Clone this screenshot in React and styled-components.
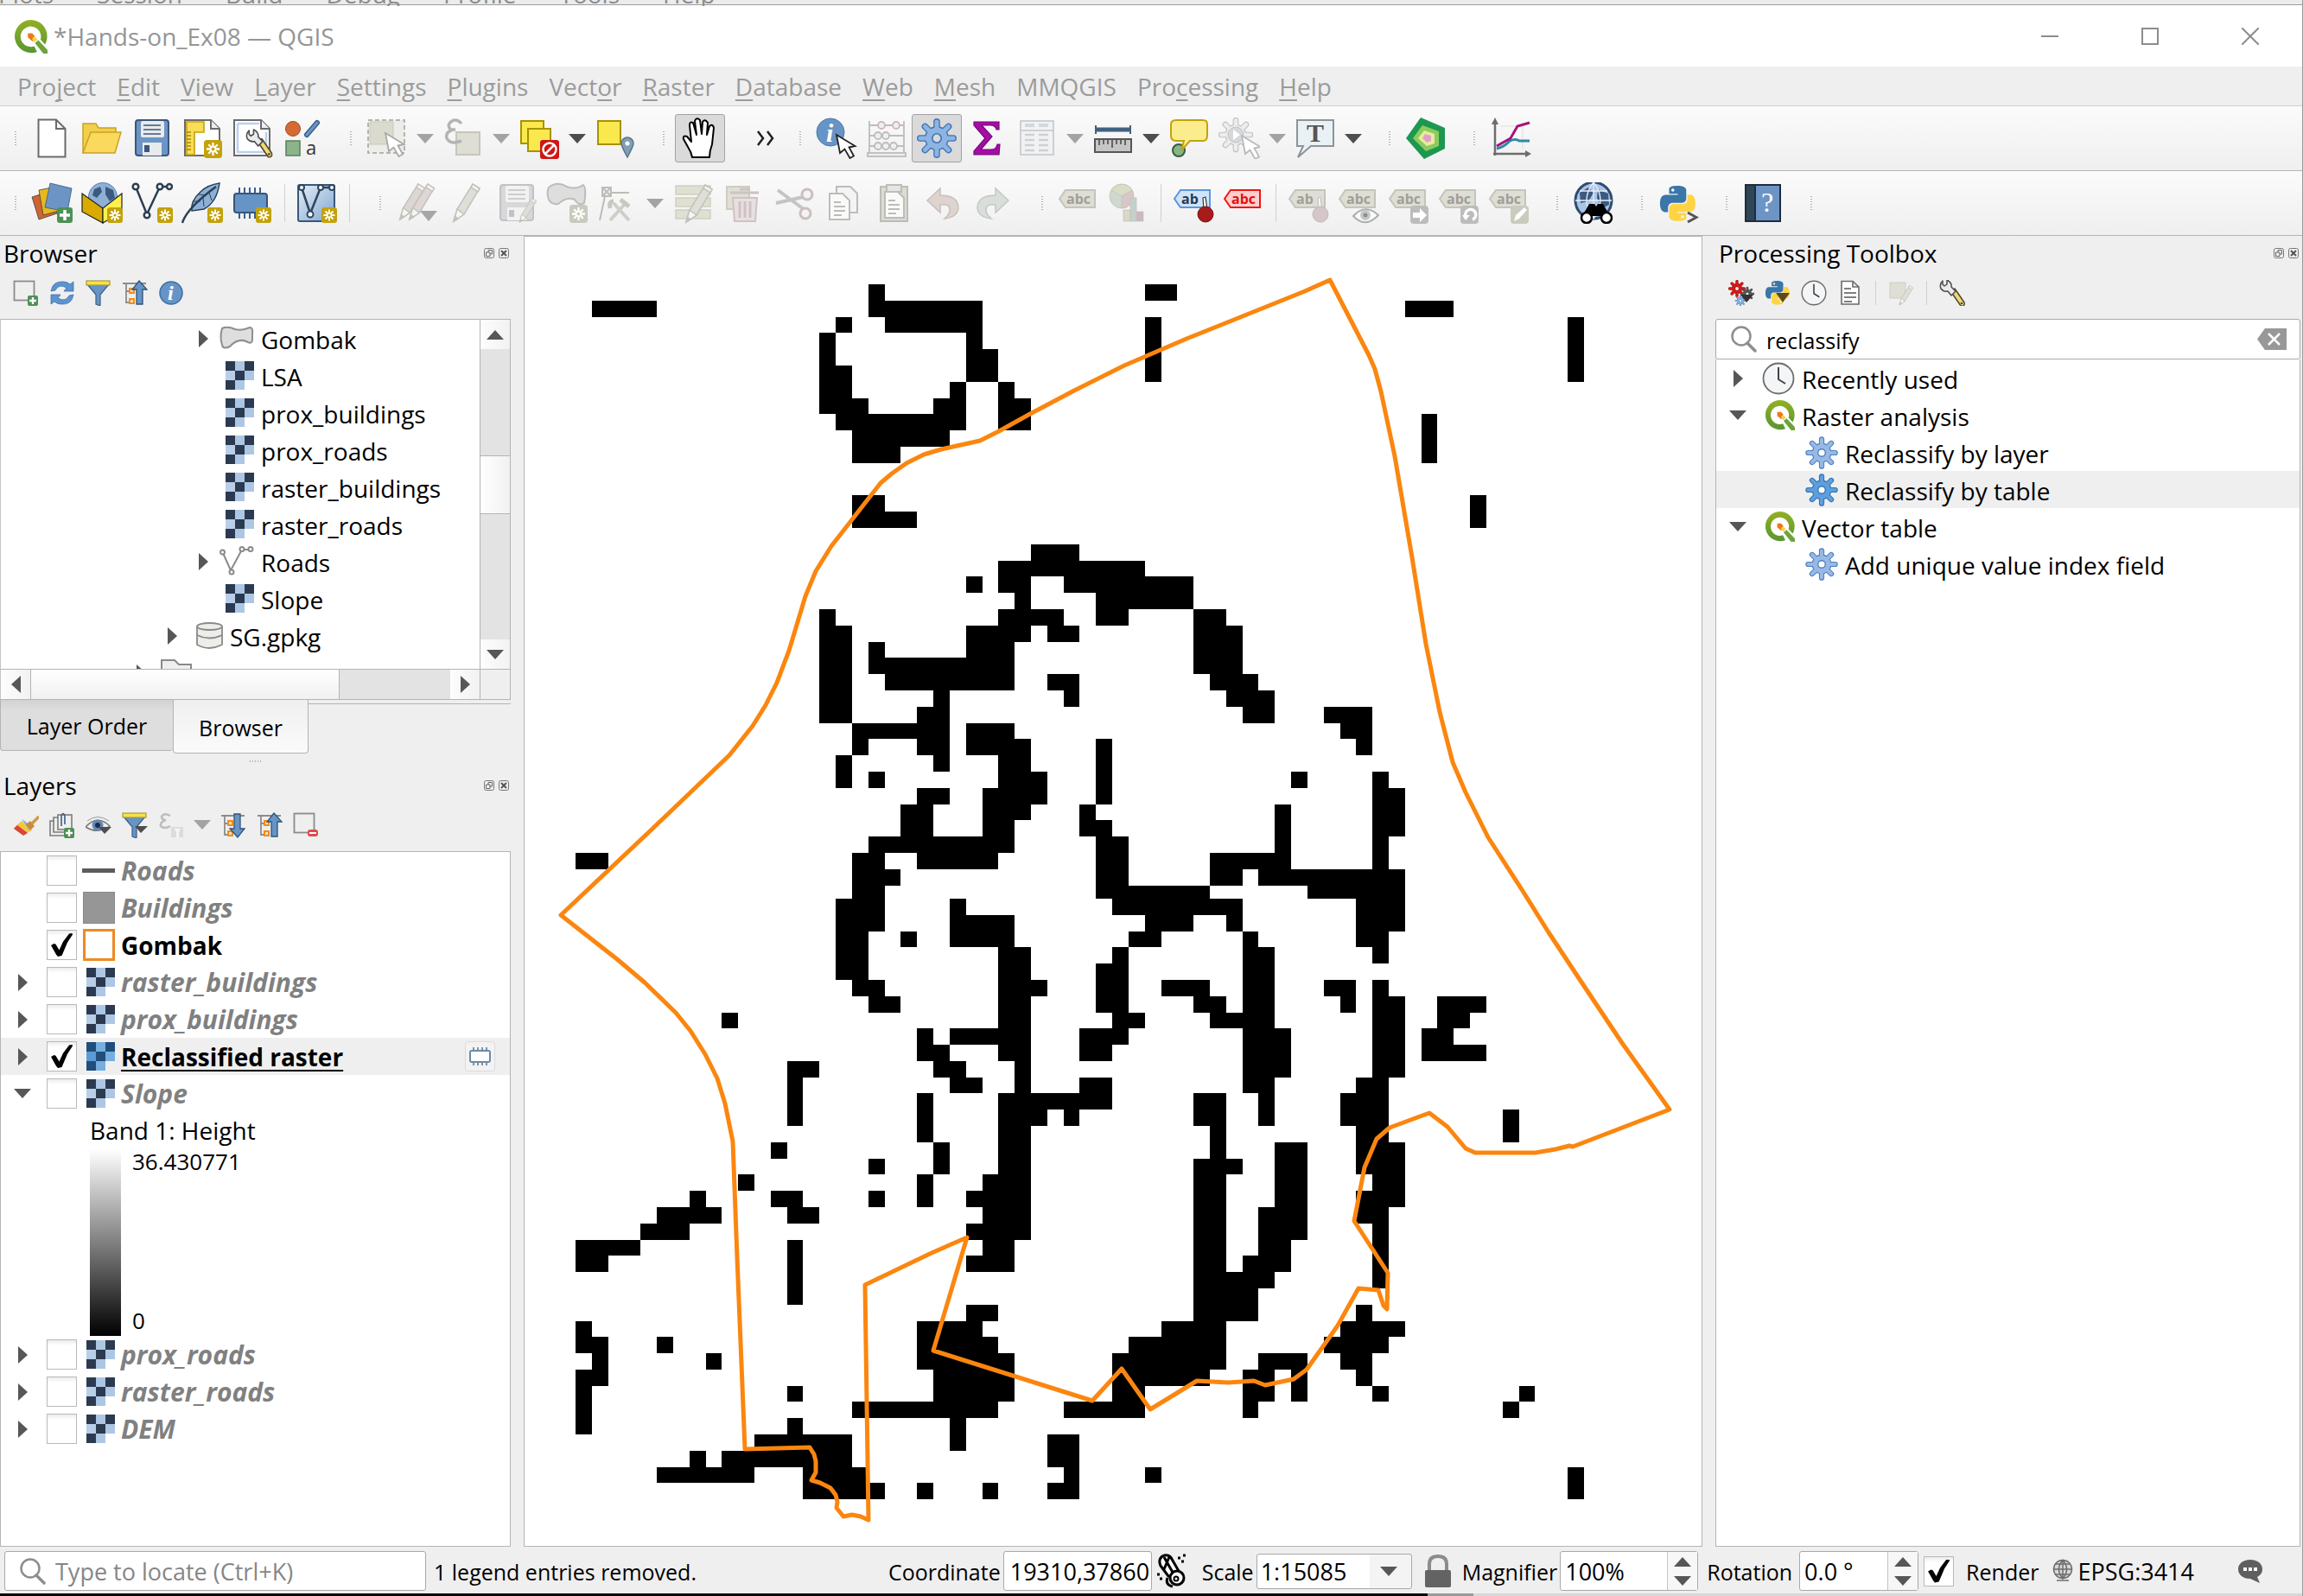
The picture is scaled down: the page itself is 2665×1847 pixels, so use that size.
import React from "react";
import styled, { createGlobalStyle, css } from "styled-components";

const GlobalStyle = createGlobalStyle`
  *, *::before, *::after { box-sizing: border-box; }
  html, body { margin: 0; padding: 0; }
  body { background: #efefef; }
  body, button, input, select { font-family: "Open Sans", "Noto Sans", sans-serif; }
  button { border: 0; padding: 0; margin: 0; background: none; color: inherit; }
  ul { list-style: none; margin: 0; padding: 0; }
`;

const LINE = "#b4b4b4";
const ORANGE = "#fb860f";

/* ---------- window frame ---------- */

const Window = styled.div`
  height: 100vh;
  display: flex;
  flex-direction: column;
  background: #efefef;
  border-right: 1px solid #9c9c9c;
  font-size: 28px;
  line-height: 36px;
  color: #000;
  overflow: hidden;
`;

const BehindMenu = styled.div`
  height: 7px;
  flex: none;
  overflow: hidden;
  display: flex;
  align-items: flex-end;
  gap: 52px;
  line-height: 28px;
  color: #8d8d8d;
  background: linear-gradient(#ececec 0 5px, #9c9c9c 5px 6px, #fff 6px);
  span { margin-left: -2px; }
`;

const TitleBar = styled.header`
  height: 70px;
  flex: none;
  display: flex;
  align-items: center;
  background: #fff;
  color: #959595;
  padding: 0 2px 0 16px;
`;

const TitleText = styled.h1`
  flex: 1;
  margin: 0 0 0 7px;
  font-size: 28px;
  font-weight: 400;
`;

const WindowButton = styled.button`
  width: 116px;
  height: 70px;
  display: grid;
  place-items: center;
`;

const MenuBar = styled.nav`
  height: 46px;
  flex: none;
  display: flex;
  align-items: center;
  padding-left: 8px;
  border-bottom: 1px solid #cfcfcf;
  color: #9b9b9b;
`;

const MenuItem = styled.button`
  font-size: 28px;
  line-height: 44px;
  padding: 0 12px;
  u { text-underline-offset: 4px; text-decoration-thickness: 2px; text-decoration-skip-ink: none; }
`;

const ToolRow = styled.div`
  height: 75px;
  flex: none;
  display: flex;
  align-items: center;
  background: linear-gradient(#fbfbfb, #efefef);
  border-bottom: 1px solid ${LINE};
`;

const Grip = styled.span`
  width: ${(p) => (p.$first ? 31 : 40)}px;
  height: 18px;
  flex: none;
  display: flex;
  justify-content: flex-end;
  padding-right: 11px;
  &::after {
    content: "";
    width: 4px;
    height: 18px;
    background: radial-gradient(circle, #b0b0b0 1px, transparent 1px) 0 0 / 4px 3px;
  }
`;

const Divider = styled.span`
  width: 17px;
  flex: none;
  height: ${(p) => (p.$small ? 28 : 44)}px;
  background: linear-gradient(#d0d0d0, #d0d0d0) center / 1px 100% no-repeat;
`;

const Tool = styled.button`
  width: 58px;
  height: 56px;
  flex: none;
  display: grid;
  place-items: center;
  ${(p) => p.$active && css`
    background: #dadada;
    border: 1px solid #a3a3a3;
    border-radius: 3px;
  `}
`;

const DropArrow = styled.button`
  width: 30px;
  height: 56px;
  flex: none;
  display: grid;
  place-items: center;
  color: ${(p) => (p.$off ? "#a3a3a3" : "#4d4d4d")};
  &::after {
    content: "";
    border: 10px solid transparent;
    border-top: 11px solid currentColor;
    border-bottom: 0;
  }
`;

const Overflow = styled.button`
  width: 60px;
  padding-left: 34px;
  flex: none;
  display: grid;
  place-items: center;
`;

/* ---------- docks ---------- */

const Main = styled.main`
  flex: 1;
  min-height: 0;
  display: grid;
  grid-template-columns: 591px minmax(0, 1fr) 677px;
  column-gap: 15px;
  padding-right: 2px;
`;

const Column = styled.div`
  min-width: 0;
  min-height: 0;
  display: flex;
  flex-direction: column;
`;

const Dock = styled.section`
  display: flex;
  flex-direction: column;
  min-height: 0;
  flex: ${(p) => (p.$grow ? "1" : "none")};
`;

const DockTitle = styled.header`
  height: 40px;
  flex: none;
  display: flex;
  align-items: center;
  gap: 5px;
  padding: 0 2px 0 4px;
  h2 { flex: 1; margin: 0; font-size: 28px; font-weight: 400; line-height: 40px; }
`;

const DockButton = styled.button`
  width: 12px;
  height: 12px;
  display: grid;
  place-items: center;
`;

const DockTools = styled.div`
  height: 56px;
  flex: none;
  display: flex;
  align-items: center;
  padding: 0 9px 5px;
`;

const SmallTool = styled.button`
  width: 42px;
  height: 40px;
  flex: none;
  display: grid;
  place-items: center;
`;

const BrowserBox = styled.div`
  border: 1px solid ${LINE};
  border-left-color: #c4c4c4;
  display: grid;
  grid-template-columns: minmax(0, 1fr) 35px;
  grid-template-rows: 404px 35px;
  background: #fff;
`;

const TreeView = styled.ul`
  overflow: hidden;
  background: #fff;
`;

const BrowserRow = styled.li`
  height: 43px;
  display: flex;
  align-items: center;
  padding-left: ${(p) => p.$level * 36 + 112}px;
`;

const Expander = styled.button`
  width: ${(p) => p.$w || 30}px;
  height: 30px;
  flex: none;
  display: grid;
  place-items: center;
  color: #575757;
  &::after {
    content: "";
    display: ${(p) => (p.$state ? "block" : "none")};
    border: 10px solid transparent;
    ${(p) => p.$state === "open"
      ? css`border-top: 11px solid currentColor; border-bottom: 0;`
      : css`border-left: 11px solid currentColor; border-right: 0;`}
  }
`;

const ItemIcon = styled.span`
  width: ${(p) => p.$w}px;
  flex: none;
  display: grid;
  justify-items: end;
`;

const ItemName = styled.span`
  margin-left: 8px;
  padding-top: 2px;
`;

const ScrollV = styled.div`
  display: flex;
  flex-direction: column;
  background: #e3e3e3;
  border-left: 1px solid ${LINE};
`;

const ScrollH = styled.div`
  display: flex;
  background: #e3e3e3;
  border-top: 1px solid ${LINE};
`;

const arrowShape = {
  up: css`border-bottom: 11px solid #575757; border-top: 0;`,
  down: css`border-top: 11px solid #575757; border-bottom: 0;`,
  left: css`border-right: 11px solid #575757; border-left: 0;`,
  right: css`border-left: 11px solid #575757; border-right: 0;`,
};

const ScrollButton = styled.button`
  flex: none;
  width: 34px;
  height: 34px;
  display: grid;
  place-items: center;
  background: linear-gradient(90deg, #fdfdfd, #f2f2f2);
  &::after { content: ""; border: 10px solid transparent; ${(p) => arrowShape[p.$dir]} }
`;

const Thumb = styled.div`
  background: linear-gradient(${(p) => (p.$vertical ? "90deg" : "180deg")}, #fff, #f1f1f1);
  border: solid ${LINE};
  border-width: ${(p) => (p.$vertical ? "1px 0" : "0 1px")};
  flex: ${(p) => p.$share} 0 0;
`;

const Trough = styled.div`
  flex: ${(p) => p.$share} 0 0;
`;

const Corner = styled.div`
  background: #efefef;
  border: solid ${LINE};
  border-width: 1px 0 0 1px;
`;

const Tabs = styled.div`
  height: 63px;
  flex: none;
  display: flex;
  align-items: flex-start;
  font-size: 25px;
`;

const Tab = styled.button`
  font-size: 25px;
  width: ${(p) => p.$w}px;
  height: ${(p) => (p.$active ? 62 : 59)}px;
  padding-top: 2px;
  background: ${(p) => (p.$active ? "linear-gradient(#efefef, #fbfbfb)" : "linear-gradient(#d2d2d2, #dedede 12px)")};
  border: solid ${LINE};
  border-width: ${(p) => (p.$active ? "0 1px 1px 1px" : "0 0 1px 1px")};
  border-radius: 0 0 4px 4px;
`;

const TabRest = styled.span`
  flex: 1;
  margin-top: 4px;
  border-top: 1px solid ${LINE};
`;

const Splitter = styled.div`
  height: 16px;
  flex: none;
  background: radial-gradient(circle, #b0b0b0 1px, transparent 1px) center / 3px 4px;
  background-clip: content-box;
  padding: 7px 287px 5px;
`;

const LayerList = styled.ul`
  flex: 1;
  min-height: 0;
  background: #fff;
  border: 1px solid ${LINE};
  overflow: hidden;
`;

const LayerRow = styled.li`
  height: 43px;
  display: flex;
  align-items: center;
  padding: 0 17px 0 10px;
  background: ${(p) => (p.$selected ? "#efefef" : "transparent")};
`;

const LayerName = styled.label`
  flex: 1;
  margin-left: 7px;
  font-size: ${(p) => (p.$on ? 28 : 30)}px;
  font-weight: 700;
  color: ${(p) => (p.$on ? "#000" : "#808080")};
  font-style: ${(p) => (p.$on ? "normal" : "italic")};
  text-decoration: ${(p) => (p.$current ? "underline" : "none")};
  text-decoration-thickness: 2px;
  text-underline-offset: 4px;
  text-decoration-skip-ink: none;
`;

const Check = styled.input`
  appearance: none;
  width: 35px;
  height: 35px;
  flex: none;
  margin: 0 0 0 ${(p) => p.$indent || 0}px;
  border: 1px solid #b9b9b9;
  background: linear-gradient(#ececec, #fff 6px);
  display: grid;
  place-items: center;
  &:checked::after {
    content: "";
    width: 25px;
    height: 27px;
    background: #000;
    clip-path: polygon(0 52%, 14% 44%, 22% 47%, 38% 72%, 56% 36%, 84% 2%, 98% 0, 100% 6%, 76% 40%, 50% 96%, 32% 100%, 24% 92%);
  }
`;

const MemoryButton = styled.button`
  width: 35px;
  height: 35px;
  display: grid;
  place-items: center;
  background: #f3f3f3;
  border: 1px solid #dcdcdc;
  border-radius: 4px;
`;

const Swatch = styled.span`
  width: 37px;
  height: 37px;
  background: ${(p) => p.$fill};
  border: ${(p) => p.$border};
`;

const LineSwatch = styled.span`
  width: 38px;
  height: 5px;
  background: #5c5c5c;
`;

const BandLabel = styled.li`
  height: 43px;
  line-height: 43px;
  padding-left: 103px;
`;

const Legend = styled.li`
  height: 216px;
  display: flex;
  gap: 13px;
  padding-left: 103px;
`;

const Ramp = styled.span`
  width: 36px;
  background: linear-gradient(#fff, #000);
`;

const RampValues = styled.span`
  display: flex;
  flex-direction: column;
  justify-content: space-between;
  font-size: 26px;
  line-height: 28px;
  padding-bottom: 4px;
`;

/* ---------- map ---------- */

const MapPane = styled.section`
  min-width: 0;
  min-height: 0;
  background: #fff;
  border: 1px solid ${LINE};
  svg { display: block; width: 100%; height: 100%; }
`;

/* ---------- processing toolbox ---------- */

const SearchBox = styled.label`
  height: 47px;
  flex: none;
  display: flex;
  align-items: center;
  gap: 10px;
  padding: 0 15px 0 17px;
  background: #fff;
  border: 1px solid #a9a9a9;
  border-radius: 3px;
  svg { flex: none; }
  button { display: grid; }
`;

const PlainInput = styled.input`
  flex: 1;
  min-width: 0;
  border: 0;
  outline: 0;
  padding: 2px 0 0;
  background: none;
  color: #000;
  font-size: ${(p) => (p.$tight ? 25 : 27)}px;
  line-height: 34px;
  &::placeholder { color: #868686; opacity: 1; }
`;

const ToolboxTree = styled.ul`
  flex: 1;
  min-height: 0;
  background: #fff;
  border: 1px solid ${LINE};
  border-top: 0;
`;

const ToolboxRow = styled.li`
  height: 43px;
  display: flex;
  align-items: center;
  padding-left: ${(p) => (p.$child ? 103 : 10)}px;
  background: ${(p) => (p.$selected ? "#efefef" : "transparent")};
`;

/* ---------- status bar ---------- */

const StatusBar = styled.footer`
  height: 54px;
  flex: none;
  display: flex;
  align-items: center;
  padding: 2px 45px 0 5px;
  font-size: 25px;
  line-height: 34px;
`;

const BottomEdge = styled.div`
  height: 3px;
  flex: none;
  background: linear-gradient(90deg, #0a0a0a 62%, #9a9a9a 62% 64%, #d8d8d8 64%);
`;

const Locate = styled.label`
  width: 488px;
  height: 46px;
  display: flex;
  align-items: center;
  gap: 10px;
  padding-left: 17px;
  background: #fff;
  border: 1px solid #a9a9a9;
  border-radius: 3px;
`;

const Message = styled.output`
  flex: 1;
  padding: 2px 0 0 9px;
`;

const StatusLabel = styled.label`
  padding-top: 2px;
  margin-right: ${(p) => p.$gap || 3}px;
  margin-left: ${(p) => p.$lead || 0}px;
`;

const Field = styled.span`
  width: ${(p) => p.$w}px;
  height: 46px;
  flex: none;
  display: flex;
  background: #fff;
  border: 1px solid #a9a9a9;
  border-radius: 3px;
  padding-left: ${(p) => p.$pad || 5}px;
  margin-right: ${(p) => p.$gap}px;
`;

const Steps = styled.span`
  width: 35px;
  display: grid;
  border-left: 1px solid #c4c4c4;
  background: #f7f7f7;
`;

const Step = styled.button`
  display: grid;
  place-items: center;
  &::after { content: ""; border: 10px solid transparent; ${(p) => arrowShape[p.$dir]} }
`;

const ScaleBox = styled.span`
  width: 180px;
  height: 41px;
  flex: none;
  display: grid;
  align-items: center;
  background: linear-gradient(90deg, #fff 130px, #f4f4f4 130px);
  border: 1px solid #a9a9a9;
  border-radius: 3px;
  margin-right: 15px;
  &::after {
    content: "";
    grid-area: 1 / 1;
    justify-self: end;
    margin-right: 16px;
    border: 10px solid transparent;
    border-top: 11px solid #575757;
    border-bottom: 0;
    pointer-events: none;
  }
  select {
    grid-area: 1 / 1;
    appearance: none;
    border: 0;
    background: none;
    font-size: 27px;
    line-height: 34px;
    padding: 2px 0 0 4px;
    color: #000;
  }
`;

const StatusButton = styled.button`
  display: flex;
  align-items: center;
  gap: 3px;
  font-size: 27px;
  margin-right: ${(p) => p.$gap || 0}px;
`;

/* ---------- icon drawings ---------- */

const Svg = ({ size = 48, box = 48, children }) => (
  <svg width={size} height={size} viewBox={`0 0 ${box} ${box}`} fill="none" aria-hidden="true">{children}</svg>
);

const Gear = ({ cx = 24, cy = 24, s = 1, fill = "#8db4e2", stroke = "#3f74b5", hole = "#fff" }) => {
  const spokes = (w, len, color) =>
    [0, 45, 90, 135].map((a) => (
      <rect key={a} x={-w / 2} y={-len} width={w} height={len * 2} rx={w / 2} fill={color} transform={`rotate(${a})`} />
    ));
  return (
    <g transform={`translate(${cx} ${cy}) scale(${s})`}>
      {spokes(7.6, 23, stroke)}
      <circle r="14" fill={stroke} />
      {spokes(5, 21.6, fill)}
      <circle r="12.6" fill={fill} />
      <circle r="6" fill={stroke} />
      <circle r="4.4" fill={hole} />
    </g>
  );
};

const Star = ({ x = 29, y = 29, s = 18, fill = "#c3a20b" }) => (
  <g transform={`translate(${x} ${y}) scale(${s / 18})`}>
    <rect width="18" height="18" rx="3" fill={fill} />
    <path d="M9 2.500v13M2.500 9h13M4.500 4.500l9 9M13.500 4.500l-9 9" stroke="#fff" strokeWidth="2" />
    <circle cx="9" cy="9" r="1.600" fill={fill} />
  </g>
);

const Cursor = ({ x = 0, y = 0, stroke = "#222" }) => (
  <path transform={`translate(${x} ${y})`} d="M0 0 L4 21 L9.500 16.500 L15.500 27 L20 24.500 L14.500 14.500 L21.500 13 Z" fill="#fff" stroke={stroke} strokeWidth="1.800" />
);

const Pencil = ({ x = 0, y = 0, s = 1, fill = "#dfdfd8", stroke = "#c2c2bc" }) => (
  <g transform={`translate(${x} ${y}) scale(${s})`} stroke={stroke} strokeWidth="1.500">
    <path d="M2 44 L6 30 L24 1 L32 6 L14 36 Z" fill={fill} />
    <path d="M22 5 L24 1 L32 6 L30 10 Z" fill="#f4f2f0" />
    <path d="M2 44 L6 30 L14 36 Z" fill="#f6f6f4" />
    <path d="M2 44 L3.500 38.500 L7 41 Z" fill={stroke} />
  </g>
);

const Tag = ({ text = "abc", fill = "#deded4", stroke = "#c4c4ba", color = "#9f9f98" }) => (
  <g>
    <path d="M2 19 L9 9 H43 V29 H9 Z" fill={fill} stroke={stroke} strokeWidth="2" />
    <text x="10" y="25" fontFamily="Open Sans, sans-serif" fontWeight="700" fontSize="16" fill={color}>{text}</text>
  </g>
);

const PY = "M14.25.18l.9.2.73.26.59.3.45.32.34.34.25.34.16.33.1.3.04.26.02.2-.01.13V8.5l-.05.63-.13.55-.21.46-.26.38-.3.31-.33.25-.35.19-.35.14-.33.1-.3.07-.26.04-.21.02H8.77l-.69.05-.59.14-.5.22-.41.27-.33.32-.27.35-.2.36-.15.37-.1.35-.07.32-.04.27-.02.21v3.06H3.17l-.21-.03-.28-.07-.32-.12-.35-.18-.36-.26-.36-.36-.35-.46-.32-.59-.28-.73-.21-.88-.14-1.05-.05-1.23.06-1.22.16-1.04.24-.87.32-.71.36-.57.4-.44.42-.33.42-.24.4-.16.36-.1.32-.05.24-.01h.16l.06.01h8.16v-.83H6.18l-.01-2.75-.02-.37.05-.34.11-.31.17-.28.25-.26.31-.23.38-.2.44-.18.51-.15.58-.12.64-.1.71-.06.77-.04.84-.02 1.27.05zm-6.3 1.98l-.23.33-.08.41.08.41.23.34.33.22.41.09.41-.09.33-.22.23-.34.08-.41-.08-.41-.23-.33-.33-.22-.41-.09-.41.09z";

const Python = ({ x = 0, y = 0, s = 1 }) => (
  <g transform={`translate(${x} ${y}) scale(${s})`}>
    <path d={PY} fill="#3a76a8" />
    <path d={PY} fill="#ffd444" transform="rotate(180 12 12)" />
  </g>
);

const Wrench = ({ x = 0, y = 0, s = 1 }) => (
  <g transform={`translate(${x} ${y}) scale(${s})`} strokeLinejoin="round">
    <path d="M14 14 L18 10 L29 26 Q30 31 25 30 Z" fill="#f0d774" stroke="#4c4833" strokeWidth="1.500" />
    <path d="M4 1 Q0 5 2 10 Q5 14 10 13 L14 18 L19 13 L14 8 Q15 3 9 0 L9 5 L6 7 L4 5 Z" fill="#e9ebec" stroke="#4d4d4d" strokeWidth="1.500" />
    <circle cx="26" cy="27" r="1.300" fill="#4c4833" />
  </g>
);

const Qgis = ({ size = 38 }) => (
  <Svg size={size}>
    <defs>
      <linearGradient id="qg" x1="0" y1="0" x2="0" y2="1"><stop offset="0" stopColor="#93b023" /><stop offset="1" stopColor="#589632" /></linearGradient>
    </defs>
    <path fill="url(#qg)" d="M24 0 A23.500 23.500 0 1 0 33 45.500 L29 37.500 A14.500 14.500 0 1 1 38 28 L44.500 35 A23.500 23.500 0 0 0 24 0 Z" />
    <path d="M20 19 h6 l4 4 l-3 3 v5 l-7 -6 z" fill="#ee7913" />
    <path d="M26 27 l4 -3 l4 4 l-5 4 z" fill="#f6d24a" />
    <path d="M30 33 l5 -4 L48 43 v5 h-6 Z" fill="#6fa33a" />
  </Svg>
);

const RasterIcon = ({ current }) => {
  const dark = current ? "#1f4e7c" : "#2b3a50";
  const light = current ? "#76aee0" : "#adc6e3";
  const mid = current ? "#5b9bd5" : "#b9cfe8";
  return (
    <Svg size={33} box={33}>
      <path d="M0 0h11v11H0zM22 0h11v11H22zM11 11h11v11H11zM0 22h11v11H0z" fill={dark} />
      <path d="M11 0h11v11H11zM22 11h11v11H22zM11 22h11v11H11z" fill={light} />
      <path d="M0 11h11v11H0z" fill={mid} />
    </Svg>
  );
};

const Magnifier = ({ size = 31 }) => (
  <Svg size={size} box={31}>
    <circle cx="12" cy="12" r="10.500" stroke="#8e8e8e" strokeWidth="2.500" />
    <path d="M19 20 L28 29" stroke="#8e8e8e" strokeWidth="3.500" strokeLinecap="round" />
  </Svg>
);

const Clock = ({ size }) => (
  <Svg size={size} box={38}>
    <circle cx="19" cy="19" r="17.500" fill="#f3f5f6" stroke="#6d6d6d" strokeWidth="1.800" />
    <path d="M19 6 V20 L27 25" stroke="#444" strokeWidth="2" />
  </Svg>
);

const Plus = ({ x, y, s = 18 }) => (
  <g transform={`translate(${x} ${y}) scale(${s / 18})`}>
    <rect width="18" height="18" rx="3" fill="#4d9058" />
    <path d="M9 3v12M3 9h12" stroke="#fff" strokeWidth="3.500" />
  </g>
);

const Funnel = () => (
  <g stroke="#3a5f86" strokeWidth="1.200">
    <path d="M2 5 L12 17 V28 L17 30 V17 L27 5 Z" fill="#6794c6" />
    <rect x="1" y="1" width="27" height="5" fill="#f6e24a" stroke="#a89a3a" />
  </g>
);

const TreeArrow = ({ down }) => (
  <g>
    <path d="M1 4 H28 M5 4 V26 H9 M5 13 H9" stroke="#8c8c8c" strokeWidth="1.800" />
    <path d="M9 10h5v5H9zM9 22h5v5H9z" fill="#fbdcae" stroke="#f08c1e" strokeWidth="2" />
    <path transform={down ? "rotate(180 20 15)" : undefined} d="M20 1 L29 11 H24 V28 H17 V11 H12 Z" fill="#6794c6" stroke="#2f5379" strokeWidth="1.300" />
  </g>
);

const VLine = ({ color = "#2d3e52", w = 2.5 }) => (
  <g stroke={color} strokeWidth={w}>
    <path d="M5 5 L18 37 L33 5 H43" />
    <circle cx="5" cy="5" r="3.300" fill="#fff" />
    <circle cx="18" cy="38" r="3.300" fill="#fff" />
    <circle cx="33" cy="5" r="3.300" fill="#fff" />
    <circle cx="44" cy="5" r="3" fill="#fff" />
  </g>
);

const Floppy = ({ body, edge, label = "#e9eaec" }) => (
  <g>
    <rect x="5" y="3" width="38" height="41" rx="3" fill={body} stroke={edge} strokeWidth="2" />
    <rect x="11" y="4" width="27" height="19" rx="2" fill={label} />
    <path d="M14 9h20M14 14h20M14 19h20" stroke={edge} strokeWidth="1.500" />
    <rect x="13" y="29" width="22" height="15" fill={label} />
    <rect x="15" y="32" width="6" height="8" fill={edge} />
  </g>
);

const GREY = "#bdbdb8";

const ICONS = {
  newDoc: <path d="M8.500 2.500 H29 L39.500 13 V45.500 H8.500 Z M29 3 V13 H39" fill="#fff" stroke="#6b6b6b" strokeWidth="2" />,
  open: (
    <g stroke="#c9a227" strokeWidth="1.500">
      <path d="M2 41 V7 H17 L20 12 H40 V20 H12 Z" fill="#f1cf4a" />
      <path d="M2 41 L11 17 H46 L39 41 Z" fill="#fbd95c" />
    </g>
  ),
  save: <Floppy body="#6c95c6" edge="#3a5778" />,
  layout: (
    <g>
      <path d="M4 3 H34 L44 13 V44 H4 Z" fill="#fff" stroke="#6b6b6b" strokeWidth="2" />
      <path d="M34 3 V13 H44" fill="#eee" stroke="#6b6b6b" strokeWidth="2" />
      <path d="M6 5 H26 V17 H15 V43 H6 Z" fill="#f8dd55" stroke="#c3a20b" strokeWidth="1.600" />
      <path d="M6 21h5M6 25h5M6 29h5M6 33h5M6 37h5M6 17h5" stroke="#a28608" strokeWidth="1.400" />
      <Star x={26} y={26} s={21} />
    </g>
  ),
  layoutManager: (
    <g>
      <path d="M3 3 H34 L44 13 V44 H3 Z" fill="#fff" stroke="#6b6b6b" strokeWidth="2" />
      <path d="M34 3 V13 H44" fill="#eee" stroke="#6b6b6b" strokeWidth="2" />
      <path d="M7 7 H32 M7 7 V40 H40 V17" stroke="#bcd0ee" strokeWidth="2.500" />
      <Wrench x={16} y={14} s={1.05} />
    </g>
  ),
  style: (
    <g>
      <circle cx="13" cy="13" r="8.500" fill="#d46a34" stroke="#a74a1b" />
      <path d="M29 20 L41 6" stroke="#3a5f8c" strokeWidth="6" strokeLinecap="round" />
      <path d="M29 20 L41 6" stroke="#6c95c6" strokeWidth="3" strokeLinecap="round" />
      <rect x="5" y="27" width="16" height="17" fill="#8cb38a" stroke="#55805a" strokeWidth="1.500" />
      <text x="28" y="43" fontSize="22" fontFamily="Open Sans, sans-serif" fill="#333">a</text>
    </g>
  ),
  select: (
    <g>
      <rect x="2" y="3" width="42" height="38" stroke="#b4b4ae" strokeWidth="2" strokeDasharray="5 3" fill="#ecece8" />
      <rect x="4" y="5" width="27" height="26" fill="#dadace" stroke="#c9c9be" />
      <Cursor x={22} y={18} stroke="#a9a9a9" />
    </g>
  ),
  selectExpr: (
    <g>
      <rect x="16" y="17" width="27" height="26" fill="#deded4" stroke="#c6c6bb" strokeWidth="2" />
      <path d="M22 7 Q17 1 11 4 Q4 9 10 14 H15 M12 14 Q3 17 5 24 Q9 32 22 27" stroke="#b4b4b4" strokeWidth="3.500" />
    </g>
  ),
  deselect: (
    <g>
      <rect x="3" y="4" width="26" height="26" fill="#fae84f" stroke="#a89200" strokeWidth="2" />
      <rect x="11" y="13" width="26" height="26" fill="#fae84f" stroke="#a89200" strokeWidth="2" />
      <rect x="25" y="26" width="22" height="22" rx="3" fill="#cf1515" />
      <circle cx="36" cy="37" r="7.500" stroke="#fff" strokeWidth="2.500" />
      <path d="M31 42 L41 32" stroke="#fff" strokeWidth="2.500" />
    </g>
  ),
  selectPin: (
    <g>
      <rect x="4" y="4" width="26" height="27" fill="#fae84f" stroke="#a89200" strokeWidth="2" />
      <path d="M38 46 Q31 33 31 30 A7 7 0 0 1 45 30 Q45 33 38 46 Z" fill="#7f9fb8" stroke="#567489" strokeWidth="1.500" />
      <circle cx="38" cy="30" r="2.500" fill="#fff" />
    </g>
  ),
  hand: (
    <path d="M15 46 Q14 40 10 34 L5 25 Q4 20 9 22 L14 28 L12 9 Q12 4 16 6 L20 20 L18 4 Q20 -1 24 3 L26 19 L27 5 Q30 1 33 6 L32 20 L35 10 Q39 7 40 12 L38 31 Q35 39 35 46 Z" fill="#fff" stroke="#000" strokeWidth="2" strokeLinejoin="round" />
  ),
  identify: (
    <g>
      <circle cx="17" cy="17" r="16" fill="#6794c6" stroke="#4a78ab" />
      <text x="12" y="28" fontSize="30" fontWeight="700" fontStyle="italic" fontFamily="Liberation Serif, serif" fill="#fff">i</text>
      <Cursor x={24} y={20} />
    </g>
  ),
  abacus: (
    <g stroke="#bcbcbc" strokeWidth="1.800" fill="#efefef">
      <path d="M4 4 V41 M44 4 V41 M4 9 H44 M4 21 H44 M4 33 H44" />
      <rect x="2" y="41" width="44" height="4" />
      <circle cx="18" cy="9" r="4" stroke="#d0b7b7" /><circle cx="35" cy="9" r="4" stroke="#d0b7b7" />
      <circle cx="14" cy="21" r="4" /><circle cx="23" cy="21" r="4" />
      <circle cx="14" cy="33" r="4" /><circle cx="23" cy="33" r="4" /><circle cx="32" cy="33" r="4" />
    </g>
  ),
  gear: <Gear hole="#dadada" />,
  sigma: <path d="M9 5 H38 V14 H35 Q34 9 28 9 H18 L30 22 L17 37 H29 Q35 37 36 31 H39 L38 43 H9 V39 L22 24 L9 9 Z" fill="#a60ca6" stroke="#74087a" strokeWidth="1.200" />,
  table: (
    <g stroke="#c0c4c8" strokeWidth="1.500">
      <rect x="5" y="4" width="38" height="39" fill="#f1f2f3" />
      <path d="M5 15 H43" />
      <path d="M10 9h11M26 9h11" strokeWidth="4" stroke="#d3d8dd" />
      <path d="M10 20h11M26 20h11M10 26h11M26 26h11M10 32h11M26 32h11M10 38h11M26 38h11" strokeWidth="2.500" stroke="#cdd1d5" />
    </g>
  ),
  measure: (
    <g>
      <path d="M4 14 H44 M4 9 V19 M44 9 V19" stroke="#41617f" strokeWidth="2" />
      <path d="M5 14 H43" stroke="#41617f" strokeWidth="5" />
      <rect x="3" y="25" width="42" height="15" fill="#c6c6c6" stroke="#555" strokeWidth="2" />
      <path d="M8 26v6M13 26v5M18 26v5M23 26v9M28 26v5M33 26v5M38 26v6" stroke="#444" strokeWidth="1.500" />
    </g>
  ),
  mapTip: (
    <g>
      <circle cx="12" cy="38" r="7" fill="#86b58a" stroke="#3a5a3c" strokeWidth="2" />
      <path d="M9 3 H40 Q45 3 45 8 V21 Q45 27 40 27 H25 L15 38 L18 27 H9 Q3 27 3 21 V8 Q3 3 9 3 Z" fill="#fbed8d" stroke="#c3a20b" strokeWidth="2" />
    </g>
  ),
  actions: (
    <g>
      <Gear cx={20} cy={20} s={0.88} fill="#ededed" stroke="#c2c2c2" hole="#dcdcdc" />
      <circle cx="20" cy="20" r="9" fill="#d6d9dc" stroke="#bfc3c7" />
      <path d="M17 14 L25 20 L17 26 Z" fill="#fff" />
      <Cursor x={27} y={21} stroke="#b9b9b9" />
    </g>
  ),
  annotation: (
    <g>
      <path d="M3 3 H45 V33 H19 L4 46 L10 33 H3 Z" fill="#eaf1f5" stroke="#8d9499" strokeWidth="2" />
      <text x="14" y="28" fontSize="30" fontFamily="Liberation Serif, serif" fontWeight="700" fill="#555">T</text>
    </g>
  ),
  contour: (
    <g>
      <path d="M18 0 L46 12 V36 L22 48 L1 24 Z" fill="#1c9850" />
      <path d="M20 9 L39 16 V33 L24 39 L9 24 Z" fill="#8ccb5e" />
      <path d="M22 15 L34 19 V30 L25 33 L15 24 Z" fill="#e4ee9c" />
      <path d="M23 19 L30 21 V27 L25 29 L20 24 Z" fill="#e3a0c4" />
    </g>
  ),
  plot: (
    <g>
      <path d="M12 10 H38 V37" stroke="#ddd" />
      <path d="M8 36 Q17 34 23 27 Q30 24 34 27 H46" stroke="#2e8aa8" strokeWidth="3" />
      <path d="M8 33 L24 24 L32 10 L46 6" stroke="#a5127c" strokeWidth="3" />
      <path d="M6 44 V4 M4 42 H44" stroke="#6d6d6d" strokeWidth="2.500" />
      <path d="M2 8 L6 0 L10 8 Z M41 38 L48 42 L41 46 Z" fill="#6d6d6d" />
    </g>
  ),

  addLayers: (
    <g stroke="#3f3f3f" strokeWidth="0.800">
      <path d="M1 17 L20 11 L30 36 L9 43 Z" fill="#cf6433" />
      <path d="M9 9 L24 6 L32 33 L14 38 Z" fill="#e6b91c" />
      <path d="M22 1 L47 7 L42 34 L16 29 Z" fill="#6c95c6" stroke="#3a5778" />
      <g stroke="none"><Plus x={30} y={29} /></g>
    </g>
  ),
  geopackage: (
    <g>
      <circle cx="25" cy="17" r="16.500" fill="#8fb0d6" stroke="#5d81ac" />
      <path d="M15 8 L22 5 L24 11 L18 18 L13 15 Z M28 5 L37 9 L39 18 L33 22 L28 14 Z" fill="#3b5a80" />
      <path d="M1 13 L25 30 V47 L1 34 Z" fill="#d9ab00" stroke="#222" strokeWidth="1.200" />
      <path d="M47 13 L25 30 V47 L47 34 Z" fill="#fdf04e" stroke="#222" strokeWidth="1.200" />
      <Star x={30} />
    </g>
  ),
  newShape: <g><VLine /><Star x={30} /></g>,
  feather: (
    <g>
      <path d="M44 1 Q41 23 26 31 L12 33 Q10 22 22 11 Q30 3 44 1 Z" fill="#8db0d6" stroke="#2b3f58" strokeWidth="1.500" />
      <path d="M1 47 Q6 30 40 5" stroke="#2b3f58" strokeWidth="2.500" />
      <path d="M20 14 L29 15 M14 22 L22 22 M26 28 L25 18 M35 21 L32 12" stroke="#2b3f58" />
      <Star x={30} />
    </g>
  ),
  chip: (
    <g>
      <path d="M9 6v8M15 6v8M21 6v8M27 6v8M33 6v8M9 34v8M15 34v8M21 34v8M27 34v8" stroke="#3a5f8c" strokeWidth="2" />
      <rect x="3" y="13" width="38" height="22" rx="3" fill="#6794c6" stroke="#34557c" strokeWidth="2" />
      <Star x={28} />
    </g>
  ),
  virtualLayer: (
    <g>
      <defs><linearGradient id="vl" x1="0" y1="0" x2="1" y2="1"><stop offset="0" stopColor="#e7eef6" /><stop offset="1" stopColor="#7fa5d0" /></linearGradient></defs>
      <rect x="2" y="3" width="42" height="42" rx="2" fill="url(#vl)" stroke="#3a5778" strokeWidth="2" />
      <path d="M6 6 L16 36 L28 6 H42" stroke="#2d4560" strokeWidth="2.500" />
      <circle cx="6" cy="6" r="3" fill="#fff" stroke="#2d4560" strokeWidth="2" /><circle cx="16" cy="37" r="3.500" fill="#fff" stroke="#2d4560" strokeWidth="2" />
      <circle cx="28" cy="6" r="3" fill="#fff" stroke="#2d4560" strokeWidth="2" /><circle cx="41" cy="6" r="3" fill="#fff" stroke="#2d4560" strokeWidth="2" />
      <Star x={29} />
    </g>
  ),
  currentEdits: (
    <g>
      <Pencil x={3} y={1} s={0.95} fill="#ddd6d3" /><Pencil x={14} y={1} s={0.95} fill="#e0d6d4" />
      <path d="M28 33 H48 L38 45 Z" fill="#a6a6a6" />
    </g>
  ),
  pencil: <Pencil x={7} y={1} />,
  saveEdits: <g><Floppy body="#d8d8da" edge="#c2c2c5" label="#f2f2f2" /><Pencil x={26} y={18} s={0.64} fill="#e0dbd6" /></g>,
  addPolygon: (
    <g>
      <path d="M3 6 Q12 -2 24 5 Q34 9 43 3 Q47 8 44 24 Q38 28 33 20 Q24 16 14 25 Q6 26 3 20 Q0 12 3 6 Z" fill="#dedede" stroke={GREY} strokeWidth="2" />
      <Star x={27} y={26} s={21} fill="#c9c9bf" />
    </g>
  ),
  vertexTool: (
    <g stroke={GREY} strokeWidth="2">
      <path d="M17 12 H38 M10 16 L4 44" />
      <rect x="7" y="6" width="10" height="10" fill="#eee" /><path d="M7 6l10 10M17 6L7 16" />
      <path d="M16 44 L34 24 M38 44 L20 24" strokeWidth="4" stroke="#cfcfca" />
      <path d="M16 30 Q14 22 20 22 M28 20 L38 28" strokeWidth="5" stroke="#c8c8c2" />
    </g>
  ),
  editTable: (
    <g>
      <path d="M4 4h40v10H4zM4 18h40v10H4zM4 32h40v10H4z" fill="#dfdfd2" stroke="#cfcfc2" strokeWidth="1.500" />
      <Pencil x={14} y={2} />
    </g>
  ),
  trash: (
    <g stroke="#d0c2c2" strokeWidth="2">
      <rect x="5" y="5" width="26" height="26" fill="#dfdfd6" stroke="#cdcdc0" />
      <path d="M12 18 H40 L38 45 H14 Z" fill="#e8e0e0" />
      <path d="M9 12 H42 M20 8 H32 M20 22 V41 M26 22 V41 M32 22 V41" strokeWidth="3" />
    </g>
  ),
  cut: (
    <g stroke="#c4c4c4" strokeWidth="2">
      <path d="M6 9 L36 31 M4 24 L40 16" strokeWidth="4" />
      <circle cx="40" cy="14" r="6" fill="#f3f3f3" stroke="#cbbebe" strokeWidth="3" /><circle cx="38" cy="36" r="6" fill="#f3f3f3" stroke="#cbbebe" strokeWidth="3" />
    </g>
  ),
  copy: (
    <g stroke={GREY} strokeWidth="2" fill="#f4f4f4">
      <path d="M16 5 H32 L40 13 V35 H16 Z" /><path d="M8 13 H23 L31 21 V43 H8 Z" fill="#fafafa" />
      <path d="M13 23h8M13 28h13M13 33h13M13 38h9" />
    </g>
  ),
  paste: (
    <g stroke={GREY} strokeWidth="2">
      <rect x="9" y="5" width="31" height="40" fill="#dcdcd2" /><path d="M14 11 H29 L36 18 V41 H14 Z" fill="#fafafa" />
      <rect x="16" y="3" width="17" height="8" fill="#e5e5e5" />
      <path d="M18 21h8M18 26h13M18 31h13M18 36h9" />
    </g>
  ),
  undo: <path d="M5 21 L20 7 V15 Q41 15 41 30 Q40 40 25 42 Q34 34 30 28 Q28 25 20 26 V35 Z" fill="#ddd3cf" stroke="#c9bfba" strokeWidth="1.500" />,
  redo: <path transform="matrix(-1 0 0 1 46 0)" d="M5 21 L20 7 V15 Q41 15 41 30 Q40 40 25 42 Q34 34 30 28 Q28 25 20 26 V35 Z" fill="#dadedb" stroke="#c2c8c4" strokeWidth="1.500" />,
  label: <Tag />,
  diagram: (
    <g stroke="#c3c3bc" strokeWidth="0.800">
      <circle cx="16" cy="16" r="14" fill="#cfd8cf" />
      <path d="M16 16 L28 9 A14 14 0 0 1 16 30 Z" fill="#dac6c6" /><path d="M16 16 L4 9 A14 14 0 0 1 28 9 Z" fill="#dcdcc6" />
      <path d="M18 32h8v13h-8z" fill="#d8d8c6" /><path d="M26 18h7v27h-7z" fill="#c3d0cc" /><path d="M33 34h8v11h-8z" fill="#ccb8be" />
    </g>
  ),
  labelPin: (
    <g>
      <Tag text="ab" fill="#cfe4fb" stroke="#5a96dc" color="#2b3a4a" />
      <path d="M35 18 L38 17 L40 32 L36 32 Z" fill="#fff" stroke="#333" strokeWidth="1.200" />
      <circle cx="38" cy="37" r="9" fill="#a71b1b" stroke="#7b1010" />
    </g>
  ),
  labelRed: <Tag fill="#ffcfcf" stroke="#f01414" color="#e01010" />,
  labelPinOff: (
    <g>
      <Tag text="ab" />
      <path d="M35 18 L38 17 L40 32 L36 32 Z" fill="#f6f6f6" stroke={GREY} />
      <circle cx="38" cy="37" r="9" fill="#d5c7c9" stroke="#c5b6b8" />
    </g>
  ),
  labelEye: (
    <g>
      <Tag />
      <path d="M18 39 Q32 24 47 38 Q32 54 18 39 Z" fill="#fafafa" stroke="#adadad" strokeWidth="2" /><circle cx="32" cy="38" r="6" fill="#c4c8cb" /><circle cx="32" cy="38" r="2.500" fill="#8f8f8f" />
    </g>
  ),
  labelMove: (
    <g><Tag /><rect x="26" y="27" width="21" height="21" rx="4" fill="#bcbcbc" /><path d="M29 35h8v-5l8 8-8 8v-5h-8z" fill="#fff" /></g>
  ),
  labelRotate: (
    <g><Tag /><rect x="26" y="27" width="21" height="21" rx="4" fill="#bcbcbc" /><path d="M32 39 A6 6 0 1 1 40 43" stroke="#fff" strokeWidth="3.500" /><path d="M28 38h9l-5 6z" fill="#fff" /></g>
  ),
  labelEdit: (
    <g><Tag /><rect x="26" y="27" width="21" height="21" rx="4" fill="#cacabf" /><path d="M30 45l2-7L42 29l3 3-9 10z" fill="#fff" /></g>
  ),
  search: (
    <g>
      <circle cx="24" cy="21" r="21" fill="#a9c4e4" stroke="#2f4c70" strokeWidth="3" />
      <path d="M8 12 L18 6 L24 12 L18 22 L9 24 Z M29 8 L41 13 L42 26 L34 30 L28 18 Z" fill="#3b5a80" />
      <path d="M3 21H45M8 10H40M24 0V42M24 0Q8 20 24 42Q40 20 24 0" stroke="#e6eff9" strokeWidth="1.300" />
      <path d="M19 25h6l2 3 2-3h6l8 14H11z" fill="#000" />
      <circle cx="16" cy="41" r="6" fill="#fff" stroke="#000" strokeWidth="2.500" /><circle cx="39" cy="41" r="6" fill="#fff" stroke="#000" strokeWidth="2.500" />
    </g>
  ),
  python: <g><Python x={3} y={4} s={1.7} /><path d="M35 35 L45 40.500 L35 46" stroke="#555" strokeWidth="3" /></g>,
  help: (
    <g>
      <rect x="4" y="3" width="40" height="42" fill="#6c95c6" stroke="#1f2c3b" strokeWidth="2" />
      <rect x="4" y="3" width="11" height="42" fill="#2f4558" stroke="#1f2c3b" strokeWidth="2" />
      <text x="22" y="34" fontSize="32" fontFamily="Liberation Serif, serif" fill="#fff">?</text>
    </g>
  ),
};

const SMALL = {
  addItem: <g><rect x="1.500" y="1.500" width="23" height="22" stroke="#8c8c8c" strokeWidth="1.800" /><Plus x={17} y={18} s={12} /></g>,
  refresh: (
    <g fill="#5d93cf" stroke="#3c71ad" strokeWidth="0.800">
      <path d="M2 13 Q4 1 16 2 Q21 2 24 5 L28 2 V13 H17 L20 9 Q11 4 7 12 Z" /><path transform="rotate(180 15 15)" d="M2 13 Q4 1 16 2 Q21 2 24 5 L28 2 V13 H17 L20 9 Q11 4 7 12 Z" />
    </g>
  ),
  filter: <Funnel />,
  collapse: <TreeArrow />,
  expand: <TreeArrow down />,
  info: <g><circle cx="15" cy="15" r="13" fill="#6794c6" stroke="#3f6ea6" strokeWidth="1.500" /><text x="11" y="23" fontSize="24" fontWeight="700" fontStyle="italic" fontFamily="Liberation Serif, serif" fill="#fff">i</text></g>,
  styling: (
    <g>
      <path d="M1 18 L10 10 L22 21 L12 26 Z" fill="#f3c83d" /><path d="M1 19 L5 15 L17 24 L12 27 Z" fill="#d9433a" /><path d="M10 8 L15 11 L22 18 L18 20 Z" fill="#88b3e0" />
      <path d="M15 14 L20 10 L25 16 L20 21 Z" fill="#c98a3c" /><path d="M22 13 L30 5" stroke="#d19845" strokeWidth="3.500" />
    </g>
  ),
  addGroup: (
    <g stroke="#7c7c7c" strokeWidth="1.600"><path d="M6 10 H1 V27 H18 M10 6 H5 V23 H22" /><rect x="10" y="3" width="16" height="17" fill="#efefef" /><path d="M14 16 V4 Q16 -1 18 4 V14" stroke="#3a5f8c" /><g stroke="none"><Plus x={17} y={18} s={12} /></g></g>
  ),
  eye: <g><path d="M0 17 Q14 2 28 16 Q14 26 0 17 Z" fill="#e8eef5" stroke="#777" strokeWidth="1.500" /><path d="M2 10 Q14 1 27 10" stroke="#999" /><circle cx="14" cy="15" r="6.500" fill="#6288b4" /><circle cx="14" cy="15" r="3" fill="#1d2d40" /><path d="M15 17 H30 L22 25 Z" fill="#4d4d4d" /></g>,
  filterDrop: <g><Funnel /><path d="M15 16 H30 L22 24 Z" fill="#4d4d4d" /></g>,
  exprOff: <g><path d="M14 4 Q7 0 4 5 Q4 9 9 9 Q2 11 3 16 Q7 20 14 16" stroke="#bdbdbd" strokeWidth="2.500" /><rect x="15" y="17" width="14" height="12" fill="#dcdcdc" /><path d="M19 19 h7 l-2 4 v6 h-3 v-6z" fill="#f5f5f5" /></g>,
  removeItem: <g><rect x="1.500" y="1.500" width="23" height="22" stroke="#8c8c8c" strokeWidth="1.800" /><rect x="17" y="20" width="12" height="8" rx="3" fill="#e04a4a" /><path d="M19 24h8" stroke="#fff" strokeWidth="2" /></g>,
  models: (
    <g><Gear cx={10} cy={10} s={0.44} fill="#d11a1a" stroke="#b31313" hole="#efefef" /><Gear cx={22} cy={16} s={0.36} fill="#555" stroke="#444" hole="#efefef" /><Gear cx={14} cy={24} s={0.28} hole="#efefef" /><path d="M14 17 H29 L21 26 Z" fill="#333" /></g>
  ),
  pythonDrop: <g><Python x={1} y={1} s={1.15} /><path d="M13 15 H29 L21 26 Z" fill="#5d4a1c" /></g>,
  results: <g><path d="M5 1.500 H18 L25 8 V28 H5 Z M18 2 V8 H25" fill="#fff" stroke="#6b6b6b" strokeWidth="1.600" /><path d="M8 10h8M8 15h14M8 20h14M8 25h9" stroke="#555" strokeWidth="1.500" /></g>,
  editOff: <g><rect x="2" y="3" width="18" height="18" fill="#deded4" stroke="#cfcfc4" /><Pencil x={12} y={6} s={0.52} /></g>,
  options: <Wrench />,
};

/* ---------- map data: [row, from, to, from, to, ...] in raster cells ---------- */

const CELLS = [
  [0, 18, 19, 35, 37], [1, 1, 5, 18, 25, 51, 54], [2, 16, 17, 19, 25, 35, 36, 61, 62],
  [3, 15, 16, 24, 25, 35, 36, 61, 62], [4, 15, 16, 24, 26, 35, 36, 61, 62], [5, 15, 17, 24, 26, 35, 36, 61, 62],
  [6, 15, 17, 23, 24, 26, 27], [7, 15, 18, 22, 24, 26, 28], [8, 16, 24, 26, 28, 52, 53], [9, 17, 23, 52, 53],
  [10, 17, 20, 52, 53], [13, 17, 19, 55, 56], [14, 17, 21, 55, 56], [16, 28, 31], [17, 26, 35],
  [18, 24, 25, 26, 28, 30, 38], [19, 27, 28, 32, 38], [20, 15, 16, 26, 30, 32, 34, 38, 40],
  [21, 15, 17, 24, 28, 29, 31, 38, 41], [22, 15, 17, 18, 19, 24, 27, 38, 41], [23, 15, 17, 18, 27, 38, 41],
  [24, 15, 17, 19, 27, 29, 31, 39, 42], [25, 15, 17, 22, 23, 30, 31, 40, 43], [26, 15, 17, 21, 23, 41, 43, 46, 49],
  [27, 17, 23, 24, 27, 47, 49], [28, 17, 18, 21, 23, 24, 28, 32, 33, 48, 49], [29, 16, 17, 22, 23, 26, 28, 32, 33],
  [30, 16, 17, 18, 19, 26, 29, 32, 33, 44, 45, 49, 50], [31, 21, 23, 25, 29, 32, 33, 49, 51],
  [32, 20, 22, 25, 28, 31, 32, 43, 44, 49, 51], [33, 20, 22, 25, 27, 31, 33, 43, 44, 49, 51],
  [34, 18, 27, 32, 34, 43, 44, 49, 50], [35, 0, 2, 17, 19, 21, 26, 32, 34, 39, 44, 49, 50],
  [36, 17, 20, 32, 34, 39, 41, 42, 51], [37, 17, 19, 32, 39, 45, 51], [38, 16, 19, 23, 24, 33, 41, 48, 51],
  [39, 16, 19, 23, 27, 35, 38, 40, 41, 48, 51], [40, 16, 18, 20, 21, 23, 27, 34, 36, 41, 42, 48, 50],
  [41, 16, 18, 26, 28, 33, 34, 41, 43, 49, 50], [42, 16, 18, 26, 28, 32, 34, 41, 43],
  [43, 17, 19, 26, 29, 32, 34, 36, 39, 41, 43, 46, 48, 49, 50],
  [44, 18, 20, 26, 28, 32, 34, 38, 40, 41, 43, 47, 48, 49, 51, 53, 56],
  [45, 9, 10, 26, 28, 33, 35, 39, 43, 49, 51, 53, 55], [46, 21, 22, 23, 28, 31, 34, 41, 44, 49, 51, 52, 54],
  [47, 21, 23, 26, 28, 31, 33, 41, 44, 49, 51, 52, 56], [48, 13, 15, 22, 24, 27, 28, 41, 44, 49, 51],
  [49, 13, 14, 23, 25, 27, 28, 31, 33, 41, 43, 48, 50], [50, 13, 14, 21, 22, 26, 33, 38, 40, 42, 43, 47, 50],
  [51, 13, 14, 21, 22, 26, 29, 30, 31, 38, 40, 42, 43, 47, 50, 57, 58], [52, 21, 22, 26, 28, 39, 40, 48, 50, 57, 58],
  [53, 12, 13, 22, 23, 26, 28, 39, 40, 43, 45, 48, 51], [54, 18, 19, 22, 23, 26, 28, 38, 41, 43, 45, 48, 51],
  [55, 10, 11, 21, 22, 25, 28, 38, 40, 43, 45, 49, 51], [56, 7, 8, 12, 14, 18, 19, 21, 22, 24, 28, 38, 40, 43, 45, 48, 51],
  [57, 5, 9, 13, 15, 25, 28, 38, 40, 42, 45, 48, 50], [58, 4, 7, 24, 28, 38, 40, 42, 45, 49, 50],
  [59, 0, 4, 13, 14, 25, 27, 38, 40, 42, 44, 49, 50], [60, 0, 2, 13, 14, 24, 27, 38, 40, 41, 44, 49, 50],
  [61, 13, 14, 38, 43, 49, 50], [62, 13, 14, 38, 42], [63, 24, 26, 38, 42, 48, 49], [64, 0, 1, 21, 25, 36, 40, 47, 51],
  [65, 0, 2, 5, 6, 21, 26, 34, 40, 46, 50], [66, 1, 2, 8, 9, 21, 27, 33, 40, 42, 45, 47, 49],
  [67, 0, 2, 22, 27, 33, 39, 41, 43, 44, 45, 48, 49], [68, 0, 1, 13, 14, 22, 27, 33, 35, 41, 43, 44, 45, 49, 50, 58, 59],
  [69, 0, 1, 17, 26, 30, 35, 41, 42, 57, 58], [70, 0, 1, 13, 14, 23, 24], [71, 11, 17, 23, 24, 29, 31],
  [72, 7, 8, 9, 17, 29, 31], [73, 5, 11, 14, 18, 30, 31, 35, 36, 61, 62], [74, 14, 19, 21, 22, 25, 26, 29, 31, 61, 62],
];

const colX = (c) => Math.round(667 + c * 18.82);
const rowY = (r) => Math.round(r < 38 ? 329 + r * 18.8 : 1040 + (r - 38) * 18.79);

const rasterPath = CELLS.map(([row, ...spans]) => {
  let d = "";
  for (let i = 0; i < spans.length; i += 2) {
    d += `M${colX(spans[i])} ${rowY(row)}H${colX(spans[i + 1])}V${rowY(row + 1)}H${colX(spans[i])}Z`;
  }
  return d;
}).join("");

const BOUNDARY = "1540,324 1511,337 1414,376 1374,392 1302,423 1244,452 1193,479 1157,499 1135,510 1090,520 1070,526 1050,536 1033,548 1020,559 963,632 945,661 933,690 914,753 900,790 887,816 872,840 845,874 755,960 650,1059 715,1110 747,1137 783,1172 800,1193 817,1220 831,1248 840,1277 849,1321 854,1455 863,1677 938,1675 943,1683 945,1691 945,1704 940,1713 950,1716 962,1722 968,1730 970,1738 969,1745 977,1755 987,1753 997,1755 1006,1759 1002,1487 1079,1450 1120,1432 1081,1563 1265,1621 1299,1584 1332,1631 1386,1598 1422,1600 1452,1598 1465,1603 1498,1596 1513,1585 1549,1534 1573,1491 1596,1493 1602,1511 1606,1515 1607,1473 1568,1413 1580,1351 1594,1318 1609,1305 1655,1288 1676,1304 1697,1329 1708,1334 1743,1334 1778,1334 1801,1330 1817,1326 1821,1327 1933,1284 1878,1207 1828,1132 1793,1079 1763,1031 1723,969 1697,917 1682,882 1667,824 1651,745 1635,645 1615,528 1599,453 1592,427 1585,411";

/* ---------- content ---------- */

const MENUS = [
  ["Pro", "j", "ect"], ["", "E", "dit"], ["", "V", "iew"], ["", "L", "ayer"], ["", "S", "ettings"], ["", "P", "lugins"],
  ["Vect", "o", "r"], ["", "R", "aster"], ["", "D", "atabase"], ["", "W", "eb"], ["", "M", "esh"], ["MMQGIS", "", ""],
  ["Pro", "c", "essing"], ["", "H", "elp"],
];

/* "|" is a grip, "-" a divider; an item is [icon, label, flag] */
const TOOLS_TOP = [
  ["newDoc", "New project"], ["open", "Open project"], ["save", "Save project"], ["layout", "New print layout"],
  ["layoutManager", "Layout manager"], ["style", "Style manager"], "|",
  ["select", "Select features", "dropOff"], ["selectExpr", "Select by expression", "dropOff"],
  ["deselect", "Deselect features", "drop"], ["selectPin", "Select by location"], "|",
  ["hand", "Pan map", "active"], ">>", "|",
  ["identify", "Identify features"], ["abacus", "Field calculator"], ["gear", "Toolbox", "active"], ["sigma", "Statistics"],
  ["table", "Attribute table", "dropOff"], ["measure", "Measure line", "drop"], ["mapTip", "Map tips"],
  ["actions", "Run action", "dropOff"], ["annotation", "Text annotation", "drop"], "|",
  ["contour", "Contours"], "|", ["plot", "Data plotly"],
];

const TOOLS_BOTTOM = [
  ["addLayers", "Data source manager"], ["geopackage", "New GeoPackage layer"], ["newShape", "New shapefile layer"],
  ["feather", "New SpatiaLite layer"], ["chip", "New scratch layer"], "-", ["virtualLayer", "New virtual layer"], "-", "|",
  ["currentEdits", "Current edits"], ["pencil", "Toggle editing"], ["saveEdits", "Save edits"],
  ["addPolygon", "Add polygon"], ["vertexTool", "Vertex tool", "dropOff"], ["editTable", "Modify attributes"],
  ["trash", "Delete selected"], ["cut", "Cut"], ["copy", "Copy"], ["paste", "Paste"], ["undo", "Undo"], ["redo", "Redo"], "|",
  ["label", "Layer labeling"], ["diagram", "Diagrams"], "-", ["labelPin", "Pinned labels"], ["labelRed", "Unplaced labels"], "-",
  ["labelPinOff", "Pin labels"], ["labelEye", "Show labels"], ["labelMove", "Move label"], ["labelRotate", "Rotate label"],
  ["labelEdit", "Change label"], "|", ["search", "MetaSearch"], "|", ["python", "Python console"], "|", ["help", "Help contents"], "|",
];

const BROWSER_ITEMS = [
  { name: "Gombak", icon: "polygon", level: 3, state: "closed" },
  { name: "LSA", icon: "raster", level: 3 }, { name: "prox_buildings", icon: "raster", level: 3 },
  { name: "prox_roads", icon: "raster", level: 3 }, { name: "raster_buildings", icon: "raster", level: 3 },
  { name: "raster_roads", icon: "raster", level: 3 }, { name: "Roads", icon: "line", level: 3, state: "closed" },
  { name: "Slope", icon: "raster", level: 3 }, { name: "SG.gpkg", icon: "database", level: 2, state: "closed" },
  { name: "", icon: "folder", level: 1, state: "closed" },
];

const TREE_ICONS = {
  polygon: (
    <svg width="40" height="30" viewBox="0 0 40 30" aria-hidden="true">
      <path d="M3 3 Q9 0 18 4 Q26 6 35 2 Q39 2 38 9 V17 Q37 21 33 19 Q22 13 12 24 Q4 28 3 22 Q0 13 3 3 Z" fill="#dedede" stroke="#8f8f8f" strokeWidth="2" />
    </svg>
  ),
  raster: <RasterIcon />,
  line: (
    <svg width="40" height="35" viewBox="0 0 40 35" fill="none" stroke="#8a8a8a" strokeWidth="2" aria-hidden="true">
      <path d="M4 8 L13 28 L26 4 H35" /><circle cx="3.500" cy="7" r="2.500" fill="#fff" /><circle cx="14" cy="30" r="2.500" fill="#fff" /><circle cx="26" cy="3.500" r="2.500" fill="#fff" /><circle cx="36" cy="3.500" r="2.500" fill="#fff" />
    </svg>
  ),
  database: (
    <svg width="31" height="31" viewBox="0 0 31 31" fill="#ededea" stroke="#8a8a8a" strokeWidth="1.800" aria-hidden="true">
      <path d="M1 5 V26 Q15 34 30 26 V5" /><ellipse cx="15.500" cy="5" rx="14.500" ry="4" /><path d="M1 15 Q15 22 30 15" fill="none" />
    </svg>
  ),
  folder: (
    <svg width="36" height="32" viewBox="0 0 36 32" fill="#efefed" stroke="#8a8a8a" strokeWidth="2" aria-hidden="true"><path d="M1 31 V1 H16 L21 6 H35 V31 Z" /></svg>
  ),
};

const LAYERS_TOP = [
  { name: "Roads", icon: "line" }, { name: "Buildings", icon: "fill" }, { name: "Gombak", icon: "outline", on: true },
  { name: "raster_buildings", state: "closed" }, { name: "prox_buildings", state: "closed" },
  { name: "Reclassified raster", state: "closed", on: true, current: true }, { name: "Slope", state: "open" },
];
const LAYERS_BOTTOM = [
  { name: "prox_roads", state: "closed" }, { name: "raster_roads", state: "closed" }, { name: "DEM", state: "closed" },
];

const TOOLBOX = [
  { name: "Recently used", icon: "clock", state: "closed" },
  { name: "Raster analysis", icon: "qgis", state: "open" },
  { name: "Reclassify by layer", child: true }, { name: "Reclassify by table", child: true, selected: true },
  { name: "Vector table", icon: "qgis", state: "open" }, { name: "Add unique value index field", child: true },
];

function ToolBar({ items, label }) {
  return (
    <ToolRow role="toolbar" aria-label={label}>
      <Grip $first />
      {items.map((item, i) => {
        if (item === "|") return <Grip key={i} />;
        if (item === "-") return <Divider key={i} />;
        if (item === ">>") {
          return (
            <Overflow key={i} aria-label="More tools">
              <svg width="22" height="18" viewBox="0 0 22 18" fill="none" stroke="#222" strokeWidth="2.500" aria-hidden="true"><path d="M2 1 L8 9 L2 17 M13 1 L19 9 L13 17" /></svg>
            </Overflow>
          );
        }
        const [icon, name, flag] = item;
        return (
          <React.Fragment key={i}>
            <Tool aria-label={name} $active={flag === "active"}><Svg>{ICONS[icon]}</Svg></Tool>
            {(flag === "drop" || flag === "dropOff") && <DropArrow aria-label={`${name} options`} $off={flag === "dropOff"} />}
          </React.Fragment>
        );
      })}
    </ToolRow>
  );
}

function DockHeader({ title }) {
  return (
    <DockTitle>
      <h2>{title}</h2>
      <DockButton aria-label={`Float ${title}`}>
        <Svg size={12} box={12}><rect x="0.500" y="0.500" width="11" height="11" rx="2" stroke="#777" /><path d="M5 5 V2.500 H9.500 V7 H7 M2.500 5 H7 V9.500 H2.500 Z" stroke="#666" /></Svg>
      </DockButton>
      <DockButton aria-label={`Close ${title}`}>
        <Svg size={12} box={12}><rect x="0.500" y="0.500" width="11" height="11" rx="2" stroke="#777" /><path d="M3 3 L9 9 M9 3 L3 9" stroke="#555" strokeWidth="2" /></Svg>
      </DockButton>
    </DockTitle>
  );
}

const SmallButton = ({ icon, label }) => (
  <SmallTool aria-label={label}><Svg size={30} box={30}>{SMALL[icon]}</Svg></SmallTool>
);

function Layer({ layer }) {
  const id = `layer-${layer.name.replace(" ", "-")}`;
  return (
    <LayerRow $selected={layer.current}>
      <Expander as={layer.state ? "button" : "span"} $state={layer.state} aria-label={layer.state ? `Toggle ${layer.name}` : undefined} />
      <Check type="checkbox" id={id} defaultChecked={layer.on} $indent={13} />
      <ItemIcon $w={44}>
        {layer.icon === "line" && <LineSwatch />}
        {layer.icon === "fill" && <Swatch $fill="#969696" $border="1px solid #8a8a8a" />}
        {layer.icon === "outline" && <Swatch $fill="#fff" $border="3px solid #ee8a22" />}
        {!layer.icon && <RasterIcon current={layer.current} />}
      </ItemIcon>
      <LayerName htmlFor={id} $on={layer.on} $current={layer.current}>{layer.name}</LayerName>
      {layer.current && (
        <MemoryButton aria-label="Temporary layer">
          <Svg size={27} box={27}>
            <path d="M6 3v5M11 3v5M16 3v5M21 3v5M6 19v5M11 19v5M16 19v5M21 19v5" stroke="#8095a8" strokeWidth="2" />
            <rect x="2" y="7" width="23" height="13" rx="2" fill="#fff" stroke="#6d8aa6" strokeWidth="2" />
          </Svg>
        </MemoryButton>
      )}
    </LayerRow>
  );
}

export default function App() {
  return (
    <Window>
      <GlobalStyle />
      <BehindMenu aria-hidden="true">
        {["Plots", "Session", "Build", "Debug", "Profile", "Tools", "Help"].map((t) => <span key={t}>{t}</span>)}
      </BehindMenu>
      <TitleBar>
        <Qgis size={39} />
        <TitleText>*Hands-on_Ex08 — QGIS</TitleText>
        <WindowButton aria-label="Minimize"><Svg size={20} box={20}><path d="M0 10H20" stroke="#8d8d8d" strokeWidth="2" /></Svg></WindowButton>
        <WindowButton aria-label="Maximize"><Svg size={20} box={20}><rect x="1" y="1" width="18" height="18" stroke="#8d8d8d" strokeWidth="2" /></Svg></WindowButton>
        <WindowButton aria-label="Close"><Svg size={20} box={20}><path d="M0 0L20 20M20 0L0 20" stroke="#8d8d8d" strokeWidth="2" /></Svg></WindowButton>
      </TitleBar>
      <MenuBar>
        {MENUS.map(([a, u, b]) => <MenuItem key={a + u + b}>{a}{u && <u>{u}</u>}{b}</MenuItem>)}
      </MenuBar>
      <ToolBar items={TOOLS_TOP} label="Project and map tools" />
      <ToolBar items={TOOLS_BOTTOM} label="Layer and editing tools" />

      <Main>
        <Column>
          <Dock>
            <DockHeader title="Browser" />
            <DockTools>
              <SmallButton icon="addItem" label="Add selected layers" />
              <SmallButton icon="refresh" label="Refresh" />
              <SmallButton icon="filter" label="Filter browser" />
              <SmallButton icon="collapse" label="Collapse all" />
              <SmallButton icon="info" label="Properties" />
            </DockTools>
            <BrowserBox>
              <TreeView>
                {BROWSER_ITEMS.map((it) => (
                  <BrowserRow key={it.name} $level={it.level}>
                    <Expander as={it.state ? "button" : "span"} $w={28} $state={it.state} aria-label={it.state ? `Expand ${it.name}` : undefined} />
                    <ItemIcon $w={45}>{TREE_ICONS[it.icon]}</ItemIcon>
                    <ItemName>{it.name}</ItemName>
                  </BrowserRow>
                ))}
              </TreeView>
              <ScrollV>
                <ScrollButton $dir="up" aria-label="Scroll up" />
                <Trough $share={123} /><Thumb $vertical $share={66} /><Trough $share={145} />
                <ScrollButton $dir="down" aria-label="Scroll down" />
              </ScrollV>
              <ScrollH>
                <ScrollButton $dir="left" aria-label="Scroll left" />
                <Thumb $share={357} /><Trough $share={129} />
                <ScrollButton $dir="right" aria-label="Scroll right" />
              </ScrollH>
              <Corner />
            </BrowserBox>
            <Tabs>
              <Tab $w={200}>Layer Order</Tab>
              <Tab $w={157} $active>Browser</Tab>
              <TabRest />
            </Tabs>
          </Dock>
          <Splitter />
          <Dock $grow>
            <DockHeader title="Layers" />
            <DockTools>
              <SmallButton icon="styling" label="Layer styling" />
              <SmallButton icon="addGroup" label="Add group" />
              <SmallButton icon="eye" label="Map themes" />
              <SmallButton icon="filterDrop" label="Filter legend" />
              <SmallButton icon="exprOff" label="Filter by expression" />
              <DropArrow $off aria-label="Filter options" />
              <SmallButton icon="expand" label="Expand all" />
              <SmallButton icon="collapse" label="Collapse all layers" />
              <SmallButton icon="removeItem" label="Remove layer" />
            </DockTools>
            <LayerList>
              {LAYERS_TOP.map((l) => <Layer key={l.name} layer={l} />)}
              <BandLabel>Band 1: Height</BandLabel>
              <Legend><Ramp /><RampValues><span>36.430771</span><span>0</span></RampValues></Legend>
              {LAYERS_BOTTOM.map((l) => <Layer key={l.name} layer={l} />)}
            </LayerList>
          </Dock>
        </Column>

        <MapPane aria-label="Map canvas">
          <svg viewBox="608 274 1362 1515" role="img" aria-label="Reclassified raster with Gombak boundary">
            <path d={rasterPath} fill="#000" shapeRendering="crispEdges" />
            <polygon points={BOUNDARY} fill="none" stroke={ORANGE} strokeWidth="5" strokeLinejoin="round" />
          </svg>
        </MapPane>

        <Column>
          <Dock $grow>
            <DockHeader title="Processing Toolbox" />
            <DockTools>
              <SmallButton icon="models" label="Models" />
              <SmallButton icon="pythonDrop" label="Scripts" />
              <SmallTool aria-label="History"><Clock size={30} /></SmallTool>
              <SmallButton icon="results" label="Results viewer" />
              <Divider $small />
              <SmallButton icon="editOff" label="Edit in place" />
              <Divider $small />
              <SmallButton icon="options" label="Options" />
            </DockTools>
            <SearchBox>
              <Magnifier />
              <PlainInput $tight aria-label="Search toolbox" defaultValue="reclassify" />
              <button aria-label="Clear search">
                <svg width="34" height="25" viewBox="0 0 34 25" aria-hidden="true"><path d="M0 12.500 L9 0 H34 V25 H9 Z" fill="#989898" /><path d="M13 6 L26 19 M26 6 L13 19" stroke="#fff" strokeWidth="2.500" /></svg>
              </button>
            </SearchBox>
            <ToolboxTree>
              {TOOLBOX.map((t) => (
                <ToolboxRow key={t.name} $child={t.child} $selected={t.selected}>
                  {!t.child && <Expander $state={t.state} aria-label={`Toggle ${t.name}`} />}
                  <ItemIcon $w={t.child ? 38 : 51}>
                    {t.icon === "clock" && <Clock size={38} />}
                    {t.icon === "qgis" && <Qgis size={35} />}
                    {t.child && <Svg size={38}><Gear s={1.03} fill={t.selected ? "#5d9fdc" : "#98b9e4"} stroke={t.selected ? "#2f74b5" : "#4a7fc4"} /></Svg>}
                  </ItemIcon>
                  <ItemName>{t.name}</ItemName>
                </ToolboxRow>
              ))}
            </ToolboxTree>
          </Dock>
        </Column>
      </Main>

      <StatusBar>
        <Locate><Magnifier /><PlainInput aria-label="Locate" placeholder="Type to locate (Ctrl+K)" /></Locate>
        <Message>1 legend entries removed.</Message>
        <StatusLabel htmlFor="coord">Coordinate</StatusLabel>
        <Field $w={172} $gap={4} $pad={7}><PlainInput id="coord" defaultValue="19310,37860" /></Field>
        <StatusButton aria-label="Toggle extents" $gap={14}>
          <Svg size={40} box={40}>
            <path d="M8 3 Q16 -1 20 8 L27 20 Q29 26 23 27 L15 26 L6 14 Q3 7 8 3 Z" fill="#fff" stroke="#000" strokeWidth="3" />
            <path d="M10 4 L22 25 M16 4 L10 18" stroke="#000" strokeWidth="3" />
            <circle cx="25" cy="28" r="8" fill="#fff" stroke="#000" strokeWidth="3" /><circle cx="24" cy="29" r="2.500" stroke="#000" strokeWidth="2" />
            <path d="M14 28 Q11 36 20 38" stroke="#000" strokeWidth="3" />
            <path d="M26 5h3M32 2h3M30 9h3M2 24h3M5 29h3" stroke="#000" strokeWidth="3" />
          </Svg>
        </StatusButton>
        <StatusLabel htmlFor="scale">Scale</StatusLabel>
        <ScaleBox><select id="scale" defaultValue="1:15085"><option>1:15085</option></select></ScaleBox>
        <StatusButton aria-label="Lock scale" $gap={13}>
          <svg width="30" height="38" viewBox="0 0 30 38" fill="none" aria-hidden="true"><path d="M5 19 V11 Q5 2 15 2 Q25 2 25 11 V19" stroke="#8c8c8c" strokeWidth="4" /><rect y="18" width="30" height="20" rx="2" fill="#636363" /></svg>
        </StatusButton>
        <StatusLabel htmlFor="mag">Magnifier</StatusLabel>
        <Field $w={160} $gap={10}>
          <PlainInput id="mag" defaultValue="100%" />
          <Steps><Step $dir="up" aria-label="Increase magnifier" /><Step $dir="down" aria-label="Decrease magnifier" /></Steps>
        </Field>
        <StatusLabel htmlFor="rot" $gap={8}>Rotation</StatusLabel>
        <Field $w={138} $gap={6}>
          <PlainInput id="rot" defaultValue="0.0 °" />
          <Steps><Step $dir="up" aria-label="Increase rotation" /><Step $dir="down" aria-label="Decrease rotation" /></Steps>
        </Field>
        <Check type="checkbox" id="render" defaultChecked />
        <StatusLabel htmlFor="render" $gap={14} $lead={14}>Render</StatusLabel>
        <StatusButton $gap={50}>
          <Svg size={28} box={28}>
            <circle cx="14" cy="12" r="10.500" fill="#d7d7d7" stroke="#6d6d6d" strokeWidth="1.500" />
            <path d="M3 12H25M5 6H23M5 18H23M14 1V23M14 1Q5 12 14 23Q23 12 14 1M7 25H21" stroke="#6d6d6d" strokeWidth="1.500" />
          </Svg>
          EPSG:3414
        </StatusButton>
        <StatusButton aria-label="Messages">
          <Svg size={30} box={30}><path d="M15 2 C24 2 29 7 29 13 Q29 19 23 22 L26 29 L15 24 C6 24 1 19 1 13 C1 7 6 2 15 2 Z" fill="#5f5f5f" /><path d="M7 11h4v4H7zM13 11h4v4h-4zM19 11h4v4h-4z" fill="#fff" /></Svg>
        </StatusButton>
      </StatusBar>
      <BottomEdge />
    </Window>
  );
}
